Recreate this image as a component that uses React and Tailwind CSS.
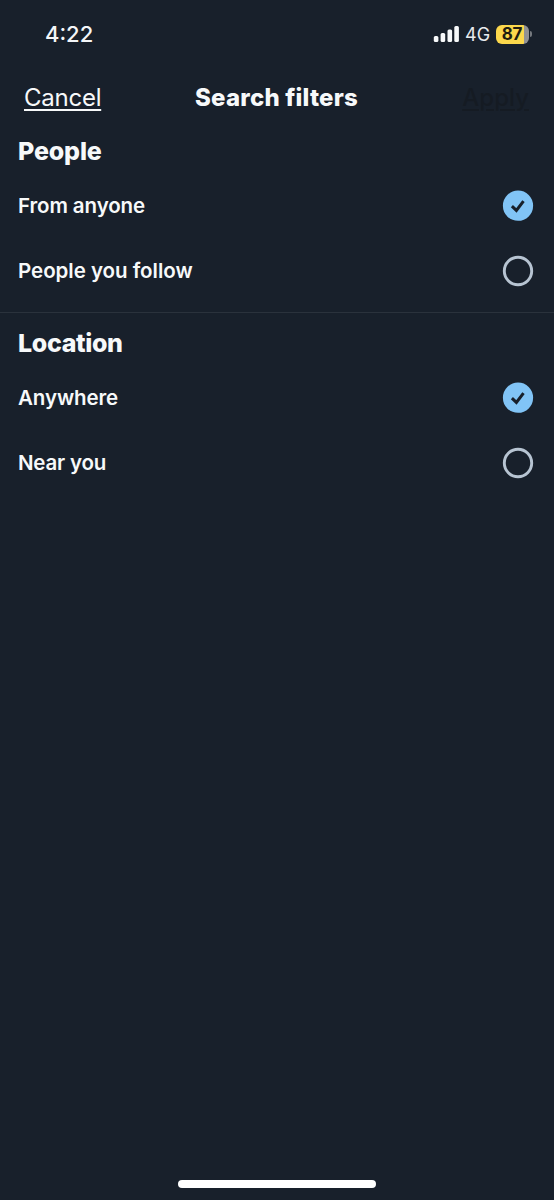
import { useState } from "react";

const sections = [
  { id: "people", title: "People", titleClass: "tracking-[-0.15px]", options: [
    { name: "From anyone", className: "tracking-[-0.1px]" },
    { name: "People you follow", className: "tracking-[-0.03px]" },
  ] },
  { id: "location", title: "Location", titleClass: "tracking-[-0.35px]", options: [
    { name: "Anywhere", className: "tracking-[-0.1px]" },
    { name: "Near you", className: "tracking-[-0.2px]" },
  ] },
];

function StatusBar() {
  return (
    <div className="h-[75px] shrink-0 flex items-start justify-between pl-[45px] pr-[22px] pt-[20px]">
      <span className="text-[22px] leading-[28px] font-medium text-[#f4f6f8]">4:22</span>
      <div className="flex items-center h-[28px]">
        {/* Signal */}
        <svg width="26" height="16" viewBox="0 0 26 16" fill="#f7f9fa">
          <rect x="0.8" y="10" width="4.6" height="6" rx="1.5" />
          <rect x="7.6" y="7" width="4.6" height="9" rx="1.5" />
          <rect x="14.5" y="3.5" width="4.6" height="12.5" rx="1.5" />
          <rect x="21.3" y="0" width="4.6" height="16" rx="1.5" />
        </svg>
        <span className="ml-[6px] pt-px w-[25px] text-[18px] leading-[28px] text-[#e8ebee]">4G</span>
        {/* Battery */}
        <div className="ml-[6px] flex items-center">
          <div className="w-[33px] h-[19px] rounded-[6px] overflow-hidden flex items-center justify-center bg-linear-to-r from-[#fcd84c] from-[85%] to-[#929294] to-[85%]">
            <span className="pr-px text-[17px] leading-[19px] font-bold text-[#201c10] tracking-[-0.3px]">87</span>
          </div>
          <div className="ml-px w-[2px] h-[6px] rounded-r-full bg-[#74787e]" />
        </div>
      </div>
    </div>
  );
}

function Radio({ checked }) {
  return (
    <svg className="overflow-visible" width="30" height="30" viewBox="0 0 30 30" fill="none">
      {checked ? (
        <>
          <circle cx="15" cy="14.7" r="15.1" fill="#81c4f6" />
          <path d="M8.9 15.1L13.4 19.4L20.5 10.1" stroke="#18202b" strokeWidth="3" />
        </>
      ) : (
        <circle cx="15" cy="15" r="13.7" stroke="#b7c4d2" strokeWidth="2.9" />
      )}
    </svg>
  );
}

export default function App() {
  const [selected, setSelected] = useState({ people: "From anyone", location: "Anywhere" });

  return (
    <div className="w-full h-[1200px] flex flex-col bg-[#18202b] text-[#f7f9fa] font-['Inter',sans-serif] overflow-hidden">
      <StatusBar />

      {/* Header */}
      <header className="h-[46px] shrink-0 grid grid-cols-[1fr_auto_1fr] items-center pl-[24px] pr-[25px]">
        <button className="justify-self-start text-[24px] leading-[30px] tracking-[-0.25px] underline decoration-[1.5px] underline-offset-[3px]">
          Cancel
        </button>
        <h1 className="text-[24px] leading-[30px] font-extrabold tracking-[0.2px]">Search filters</h1>
        <button className="justify-self-end text-[24px] leading-[30px] font-medium text-[#151b23] underline decoration-[1.5px] underline-offset-[3px]">
          Apply
        </button>
      </header>

      {/* Filters */}
      <main className="flex-1">
        {sections.map((section, i) => (
          <section
            key={section.id}
            className={`pt-2 pb-2 ${i < sections.length - 1 ? "border-b border-[#2a323c]" : ""}`}
          >
            <h2 className={`h-[44px] flex items-center px-[18px] pt-px text-[25px] font-extrabold ${section.titleClass}`}>
              {section.title}
            </h2>
            {section.options.map((option) => (
              <button
                key={option.name}
                onClick={() => setSelected({ ...selected, [section.id]: option.name })}
                className="w-full h-[65.5px] flex items-center justify-between pl-[18px] pr-[21px]"
              >
                <span className={`text-[20.5px] leading-[28px] font-semibold ${option.className}`}>{option.name}</span>
                <Radio checked={selected[section.id] === option.name} />
              </button>
            ))}
          </section>
        ))}
      </main>

      {/* Home indicator */}
      <div className="shrink-0 mx-auto mb-[12px] w-[198px] h-[8px] rounded-full bg-white" />
    </div>
  );
}
